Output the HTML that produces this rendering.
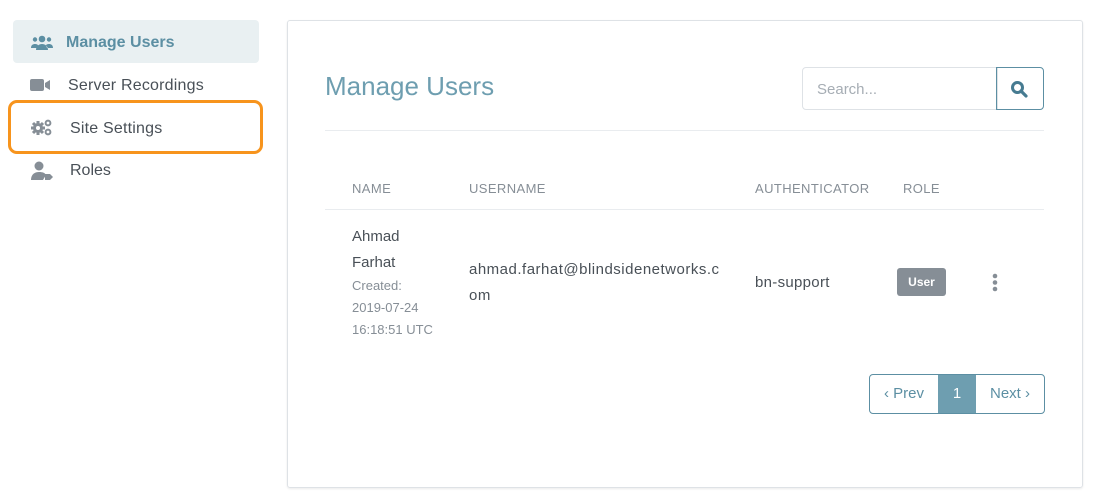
<!DOCTYPE html>
<html><head><style>
body{margin:0;width:1100px;height:499px;background:#fff;font-family:"Liberation Sans",sans-serif;position:relative;overflow:hidden;color:#495057}
.a{position:absolute}
.nav{font-size:16px;color:#495057}
.th{font-size:13px;color:#868e96;letter-spacing:.4px}
</style></head><body>
<div class="a" style="left:13px;top:20px;width:246px;height:43px;background:#e9f0f2;border-radius:4px"></div>
<svg class="a" style="left:30px;top:35px" width="24" height="16" viewBox="0 0 24 16"><circle cx="12" cy="4" r="3.3" fill="#5c8fa3"/><circle cx="5" cy="4.5" r="2.2" fill="#5c8fa3"/><circle cx="19" cy="4.5" r="2.2" fill="#5c8fa3"/><path d="M6 15c0-4 3-6 6-6s6 2 6 6z M1 13c0-3 2-4 4-4s3 1 3 1l-1 3z M23 13c0-3-2-4-4-4s-3 1-3 1l1 3z" fill="#5c8fa3"/></svg>
<div class="a nav" style="left:66px;top:34px;color:#5c8fa3;font-weight:bold">Manage Users</div>
<svg class="a" style="left:30px;top:78px" width="22" height="14"><rect x="0" y="1" width="14" height="12" rx="2" fill="#868e96"/><path d="M15 5l5-3v10l-5-3z" fill="#868e96"/></svg>
<div class="a nav" style="left:68px;top:77px;letter-spacing:.2px">Server Recordings</div>
<div class="a" style="left:8px;top:100px;width:249px;height:48px;border:3px solid #f7941d;border-radius:9px"></div>
<svg class="a" style="left:30px;top:118px" width="24" height="18"><circle cx="8" cy="10" r="5" fill="#868e96"/><g stroke="#868e96" stroke-width="3"><path d="M8 3v14M1 10h14M3 5l10 10M13 5L3 15"/></g><circle cx="8" cy="10" r="2" fill="#fff"/><circle cx="18" cy="5" r="2.4" fill="none" stroke="#868e96" stroke-width="2"/><circle cx="18" cy="14" r="2.4" fill="none" stroke="#868e96" stroke-width="2"/></svg>
<div class="a nav" style="left:70px;top:120px;letter-spacing:.2px">Site Settings</div>
<svg class="a" style="left:30px;top:161px" width="24" height="20"><circle cx="9" cy="5" r="4.5" fill="#868e96"/><path d="M1 19c0-6 4-8 8-8s6 1 7 3l-3 5z" fill="#868e96"/><path d="M15 13h5l3 3-3 3h-5z" fill="#868e96"/></svg>
<div class="a nav" style="left:70px;top:162px">Roles</div>

<div class="a" style="left:287px;top:20px;width:794px;height:466px;border:1px solid #dee2e6;border-radius:3px;box-shadow:0 1px 2px rgba(0,0,0,.08)"></div>
<div class="a" style="left:325px;top:71px;font-size:26px;color:#6e9eb0">Manage Users</div>
<div class="a" style="left:802px;top:67px;width:194px;height:41px;border:1px solid #dee2e6;border-radius:4px 0 0 4px"></div>
<div class="a" style="left:817px;top:81px;font-size:15px;color:#a6adb4">Search...</div>
<div class="a" style="left:996px;top:67px;width:46px;height:41px;border:1px solid #5c8fa3;border-radius:0 4px 4px 0"></div>
<svg class="a" style="left:1010px;top:80px" width="18" height="18"><circle cx="7.5" cy="7.5" r="5" fill="none" stroke="#467b91" stroke-width="3"/><path d="M11 11l5 5" stroke="#467b91" stroke-width="3.2" stroke-linecap="round"/></svg>
<div class="a" style="left:325px;top:130px;width:719px;height:1px;background:#e9ecef"></div>
<div class="a th" style="left:352px;top:181px">NAME</div>
<div class="a th" style="left:469px;top:181px">USERNAME</div>
<div class="a th" style="left:755px;top:181px">AUTHENTICATOR</div>
<div class="a th" style="left:903px;top:181px">ROLE</div>
<div class="a" style="left:325px;top:209px;width:719px;height:1px;background:#e9ecef"></div>
<div class="a" style="left:352px;top:224px;font-size:15px;line-height:26px">Ahmad<br>Farhat</div>
<div class="a" style="left:352px;top:275px;font-size:13px;line-height:22px;color:#868e96">Created:<br>2019-07-24<br>16:18:51 UTC</div>
<div class="a" style="left:469px;top:257px;font-size:15px;line-height:26px;letter-spacing:.5px">ahmad.farhat@blindsidenetworks.c<br>om</div>
<div class="a" style="left:755px;top:274px;font-size:15px;letter-spacing:.3px">bn-support</div>
<div class="a" style="left:897px;top:268px;width:49px;height:28px;background:#868e96;border-radius:3px;color:#fff;font-size:12px;font-weight:bold;text-align:center;line-height:28px">User</div>
<svg class="a" style="left:991px;top:273px" width="8" height="20"><circle cx="4" cy="3" r="2.3" fill="#868e96"/><circle cx="4" cy="9.5" r="2.3" fill="#868e96"/><circle cx="4" cy="16" r="2.3" fill="#868e96"/></svg>
<div class="a" style="left:869px;top:374px;width:174px;height:38px;border:1px solid #5c8fa3;border-radius:4px;overflow:hidden;display:flex;font-size:15px;color:#5c8fa3">
<div style="width:68px;text-align:center;line-height:38px">‹ Prev</div>
<div style="width:38px;background:#6e9eb0;color:#fff;text-align:center;line-height:38px">1</div>
<div style="flex:1;text-align:center;line-height:38px">Next ›</div></div>
</body></html>
